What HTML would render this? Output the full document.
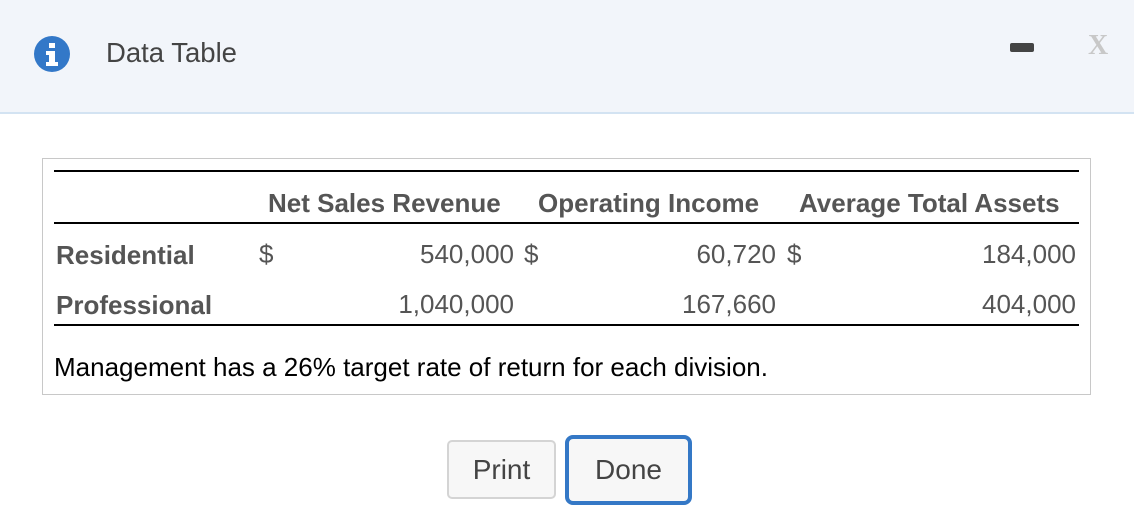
<!DOCTYPE html>
<html><head><style>
body{margin:0;width:1134px;height:530px;background:#fff;position:relative;overflow:hidden;font-family:"Liberation Sans",Arial,sans-serif}
.hd{position:absolute;left:0;top:0;width:1134px;height:112px;background:#f2f5fa;border-bottom:2px solid #d3e3f2}
.a{position:absolute;white-space:nowrap}
.t{font-size:26px;color:#555;}
.b{font-weight:bold}
.r{text-align:right}
.ln{position:absolute;left:54px;width:1025px;height:2px;background:#000}
.btn{position:absolute;background:#f7f7f7;color:#444;font-size:28px;text-align:center;box-sizing:border-box}
</style></head><body>
<div class="hd"></div>
<svg class="a" style="left:34px;top:36px" width="36" height="36" viewBox="0 0 36 36"><circle cx="18" cy="18" r="18" fill="#3378c8"/><rect x="15" y="7" width="6" height="5" fill="#fff"/><path d="M12 15h9v11h3v4H12v-4h3v-7h-3z" fill="#fff"/></svg>
<div class="a" style="left:106px;top:37px;font-size:27.5px;color:#444">Data Table</div>
<div class="a" style="left:1010px;top:43px;width:24px;height:9px;background:#444;border-radius:2px"></div>
<div class="a" style="left:1088px;top:30px;font-size:28px;font-weight:bold;color:#c8c8c8;font-family:'Liberation Serif',serif">X</div>
<div class="a" style="left:42px;top:158px;width:1047px;height:235px;border:1px solid #c8c8c8"></div>
<div class="ln" style="top:170px"></div>
<div class="ln" style="top:222px"></div>
<div class="ln" style="top:324px"></div>
<div class="a t b" style="left:268px;top:188px">Net Sales Revenue</div>
<div class="a t b" style="left:538px;top:188px">Operating Income</div>
<div class="a t b" style="left:799px;top:188px">Average Total Assets</div>
<div class="a t b" style="left:56px;top:240px">Residential</div>
<div class="a t b" style="left:56px;top:290px">Professional</div>
<div class="a t" style="left:259px;top:239px">$</div>
<div class="a t r" style="left:360px;width:154px;top:239px">540,000</div>
<div class="a t" style="left:524px;top:239px">$</div>
<div class="a t r" style="left:620px;width:156px;top:239px">60,720</div>
<div class="a t" style="left:787px;top:239px">$</div>
<div class="a t r" style="left:920px;width:156px;top:239px">184,000</div>
<div class="a t r" style="left:340px;width:174px;top:289px">1,040,000</div>
<div class="a t r" style="left:620px;width:156px;top:289px">167,660</div>
<div class="a t r" style="left:920px;width:156px;top:289px">404,000</div>
<div class="a" style="left:54px;top:352px;font-size:26px;color:#000">Management has a 26% target rate of return for each division.</div>
<div class="btn" style="left:447px;top:440px;width:109px;height:59px;border:2px solid #d4d4d4;border-radius:5px;line-height:55px">Print</div>
<div class="btn" style="left:565px;top:435px;width:127px;height:70px;border:4px solid #3478c6;border-radius:8px;line-height:62px">Done</div>
</body></html>
